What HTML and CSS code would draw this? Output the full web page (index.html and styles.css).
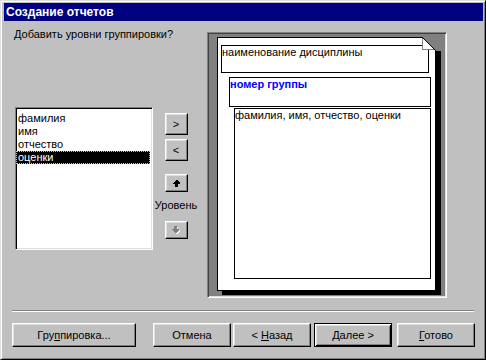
FILE: index.html
```html
<!DOCTYPE html>
<html lang="ru">
<head>
    <meta charset="UTF-8">
    <title>Создание отчетов</title>
    <link rel="stylesheet" href="styles.css">
</head>
<body>
<div class="window">
    <div class="titlebar">Создание отчетов</div>
    <div class="dialog">
        <div class="main">
            <div class="left">
                <div class="prompt">Добавить уровни группировки?</div>
                <div class="pick">
                    <ul class="listbox">
                        <li>фамилия</li>
                        <li>имя</li>
                        <li>отчество</li>
                        <li class="selected">оценки</li>
                    </ul>
                    <div class="movers">
                        <button class="btn mini">&gt;</button>
                        <button class="btn mini second">&lt;</button>
                        <button class="btn mini up">
                            <svg width="7" height="7" viewBox="0 0 7 7" shape-rendering="crispEdges"><polygon points="3,0 4,0 7,3 7,4 5,4 5,7 2,7 2,4 0,4 0,3" fill="#000"/></svg>
                        </button>
                        <div class="level">Уровень</div>
                        <button class="btn mini down" disabled>
                            <svg width="8" height="8" viewBox="0 0 8 8" shape-rendering="crispEdges"><polygon points="3,1 6,1 6,4 8,4 8,5 5,8 4,8 1,5 1,4 3,4" fill="#fff"/><polygon points="2,0 5,0 5,3 7,3 7,4 4,7 3,7 0,4 0,3 2,3" fill="#808080"/></svg>
                        </button>
                    </div>
                </div>
            </div>
            <div class="preview">
                <div class="page">
                    <svg class="fold" width="20" height="14" viewBox="0 0 20 14" shape-rendering="crispEdges">
                        <polygon points="1,0 20,0 20,14 14,14" fill="#808080"/>
                        <polygon points="1,0 1,12 14,14" fill="#fff"/>
                        <line x1="1.5" y1="0" x2="1.5" y2="12" stroke="#808080"/>
                        <line x1="1" y1="12.5" x2="14" y2="12.5" stroke="#808080"/>
                        <line x1="1" y1="0" x2="15" y2="14" stroke="#000" shape-rendering="auto"/>
                    </svg>
                    <div class="band head">наименование дисциплины</div>
                    <div class="band group">номер группы</div>
                    <div class="band detail">фамилия, имя, отчество, оценки</div>
                </div>
            </div>
        </div>
        <div class="separator"></div>
        <div class="actions">
            <button class="btn wide"><span>Гру<u>п</u>пировка...</span></button>
            <button class="btn cancel"><span>Отмена</span></button>
            <button class="btn back"><span>&lt; <u>Н</u>азад</span></button>
            <button class="btn next default"><span><u>Д</u>алее &gt;</span></button>
            <button class="btn finish"><span><u>Г</u>отово</span></button>
        </div>
    </div>
</div>
</body>
</html>
```

FILE: styles.css
```css
body {
    margin: 0;
    padding: 0;
    background-color: #c0c0c0;
    font-family: "Liberation Sans", Arial, sans-serif;
    font-size: 11px;
    color: #000000;
}
.window {
    width: 486px;
    height: 360px;
    box-sizing: border-box;
    background-color: #c0c0c0;
    border: 1px solid;
    border-color: #dfdfdf #000000 #000000 #dfdfdf;
    box-shadow: inset 1px 1px #ffffff, inset -1px -1px #808080;
    padding: 2px 2px 2px 3px;
}
.titlebar {
    height: 18px;
    line-height: 18px;
    background-color: #000080;
    color: #ffffff;
    font-weight: bold;
    font-size: 12px;
    padding-left: 2px;
}
.dialog {
    padding: 7px 0 0 8px;
}
.main {
    display: flex;
    height: 270px;
}
.left {
    width: 184px;
    padding-left: 2px;
}
.prompt {
    line-height: 13px;
}
.pick {
    display: flex;
    margin-top: 66px;
}
.listbox {
    list-style: none;
    margin: 0 1px 0 1px;
    padding: 4px 0 0 0;
    width: 138px;
    height: 143px;
    box-sizing: border-box;
    background-color: #ffffff;
    border: 1px solid;
    border-color: #808080 #ffffff #ffffff #808080;
    box-shadow: inset 1px 1px #000000, inset -1px -1px #dfdfdf;
}
.listbox li {
    line-height: 13px;
    height: 13px;
    padding-left: 1px;
    margin: 0 2px 0 1px;
}
.listbox li.selected {
    background-color: #000000;
    color: #ffffff;
    outline: 1px dotted #c0c0c0;
    outline-offset: -1px;
    margin-left: 0;
    padding-left: 2px;
}
.movers {
    width: 44px;
    display: flex;
    flex-direction: column;
    align-items: center;
    padding-top: 6px;
}
.btn {
    font-family: "Liberation Sans", Arial, sans-serif;
    font-size: 11px;
    color: #000000;
    background-color: #c0c0c0;
    margin: 0;
    padding: 0;
    box-sizing: border-box;
    border: 1px solid;
    border-color: #ffffff #000000 #000000 #ffffff;
    box-shadow: inset -1px -1px #808080, inset 1px 1px #dfdfdf;
    display: flex;
    align-items: center;
    justify-content: center;
}
.btn span {
    white-space: pre;
}
.btn u {
    text-decoration: underline;
    text-underline-offset: 1px;
}
.mini {
    width: 23px;
    height: 22px;
}
.mini.second {
    margin-top: 4px;
}
.mini.up {
    height: 18px;
    margin-top: 13px;
}
.mini.down {
    height: 18px;
    margin-top: 9px;
}
.level {
    line-height: 13px;
    margin-top: 7px;
}
.preview {
    margin: 4px 0 0 9px;
    width: 240px;
    height: 266px;
    box-sizing: border-box;
    background-color: #808080;
    border: 1px solid;
    border-color: #808080 #ffffff #ffffff #808080;
    box-shadow: inset 1px 1px #404040, inset -1px -1px #dfdfdf;
    padding: 4px 0 0 9px;
}
.page {
    position: relative;
    width: 219px;
    height: 254px;
    box-sizing: border-box;
    background-color: #ffffff;
    border: 1px solid #000000;
    box-shadow: 5px 4px 0 #000000;
    padding-top: 7px;
}
.fold {
    position: absolute;
    left: 203px;
    top: -1px;
}
.band {
    box-sizing: border-box;
    border: 1px solid #000000;
    line-height: 13px;
}
.band.head {
    margin-left: 3px;
    width: 208px;
    height: 28px;
}
.band.group {
    margin: 4px 0 0 11px;
    width: 202px;
    height: 30px;
    color: #0000ff;
    font-weight: bold;
}
.band.detail {
    margin: 1px 0 0 16px;
    width: 197px;
    height: 171px;
}
.separator {
    margin-top: 12px;
    width: 462px;
    border-top: 1px solid #808080;
    border-bottom: 1px solid #ffffff;
}
.actions {
    display: flex;
    margin-top: 11px;
}
.actions .btn {
    height: 24px;
    width: 78px;
}
.actions .wide {
    width: 124px;
}
.actions .cancel {
    margin-left: 17px;
}
.actions .back {
    margin-left: 2px;
}
.actions .next {
    margin-left: 3px;
}
.actions .finish {
    margin-left: 5px;
}
.btn.default {
    border: 1px solid #000000;
    box-shadow: inset 1px 1px #ffffff, inset -1px -1px #000000, inset 2px 2px #dfdfdf, inset -2px -2px #808080;
}
```
